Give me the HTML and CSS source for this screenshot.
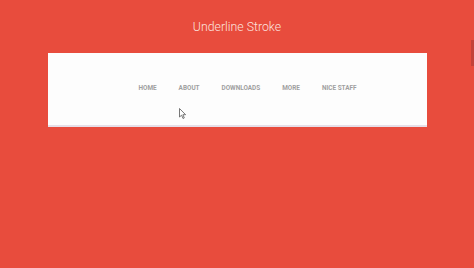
FILE: index.html
```html
<!DOCTYPE html>
<html>
<head>
<meta charset="utf-8">
<link rel="stylesheet" href="styles.css">
</head>
<body>
<div class="page">
  <h1 class="title">Underline Stroke</h1>
  <div class="card">
    <nav class="nav">
      <a class="nav-item">HOME</a>
      <a class="nav-item">ABOUT</a>
      <a class="nav-item">DOWNLOADS</a>
      <a class="nav-item">MORE</a>
      <a class="nav-item">NICE STAFF</a>
    </nav>
    <svg class="cursor" width="8" height="12" viewBox="0 0 8 12"><path d="M0.5 0.5 L0.5 9 L2.6 7.2 L4 10.5 L5.3 9.9 L3.9 6.7 L6.6 6.7 Z" fill="#fff" stroke="#555" stroke-width="0.8"/></svg>
  </div>
  <div class="scroll-thumb"></div>
</div>
</body>
</html>
```
FILE: styles.css
```css
html, body {
  margin: 0;
  padding: 0;
  height: 100%;
}
body {
  background: #e84c3d;
  font-family: Roboto, "Liberation Sans", sans-serif;
  overflow: hidden;
}
.page {
  position: relative;
  height: 268px;
  display: flex;
  flex-direction: column;
  align-items: center;
}
.title {
  margin: 19px 0 0;
  height: 34px;
  font-weight: 300;
  font-size: 12.3px;
  line-height: 16px;
  color: #fce3df;
}
.card {
  position: relative;
  box-sizing: border-box;
  width: 379px;
  height: 74px;
  background: #fdfdfd;
  border-bottom: 2px solid #e6dfe8;
  display: flex;
  align-items: flex-start;
}
.nav {
  display: flex;
  gap: 22px;
  margin: 31px 0 0 91px;
}
.nav-item {
  font-size: 6.4px;
  font-weight: 700;
  line-height: 8px;
  color: #a0a0a0;
}
.cursor {
  position: absolute;
  left: 131px;
  top: 55px;
}
.scroll-thumb {
  position: absolute;
  right: 0;
  top: 40px;
  width: 3px;
  height: 26px;
  background: #c4423a;
}
```
